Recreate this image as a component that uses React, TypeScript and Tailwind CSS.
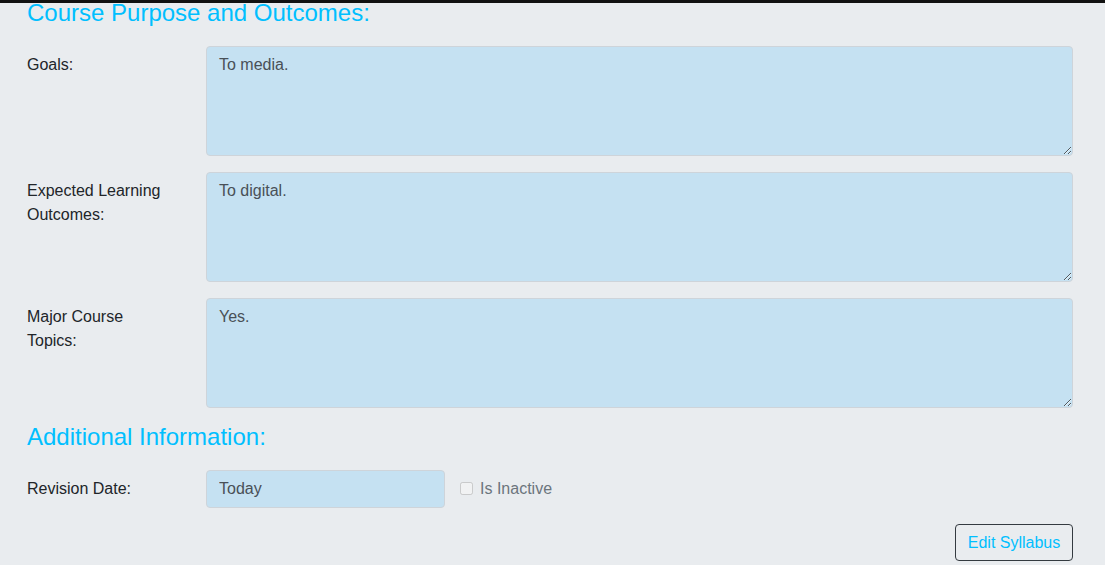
const font = "font-['Liberation_Sans',Arial,sans-serif]";

function TextRow({ label, value }: { label: string; value: string }) {
  return (
    <div className="flex">
      <label className="w-[179px] shrink-0 pr-[34px] pt-[7px] text-[16px] leading-[24px] text-[#212529]">
        {label}
      </label>
      <textarea
        readOnly
        defaultValue={value}
        className="h-[110px] flex-1 rounded-[4px] border border-[#ced4da] bg-[#c5e1f2] px-[12px] py-[6px] text-[16px] leading-[24px] text-[#495057] outline-none"
      />
    </div>
  );
}

export default function App() {
  return (
    <div className={`flex h-[565px] w-[1114px] overflow-hidden bg-white ${font}`}>
      <div className="w-[1105px] shrink-0 bg-[#e9ecef]">
        <div className="h-[3px] bg-[#111]" />
        <div className="pl-[27px] pr-[32px]">
          <h2 className="-mt-px text-[24px] leading-[22px] text-[#00bfff]">Course Purpose and Outcomes:</h2>

          <div className="mt-[22px] flex flex-col gap-[16px]">
            <TextRow label="Goals:" value="To media." />
            <TextRow label="Expected Learning Outcomes:" value="To digital." />
            <TextRow label="Major Course Topics:" value="Yes." />
          </div>

          <h2 className="mt-[18px] text-[24px] leading-[22px] text-[#00bfff]">Additional Information:</h2>

          <div className="mt-[22px] flex">
            <label className="w-[179px] shrink-0 pt-[7px] text-[16px] leading-[24px] text-[#212529]">
              Revision Date:
            </label>
            <input
              readOnly
              defaultValue="Today"
              className="h-[38px] w-[239px] rounded-[4px] border border-[#ced4da] bg-[#c5e1f2] px-[12px] text-[16px] text-[#495057] outline-none"
            />
            <label className="ml-[15px] flex items-center gap-[7px] pb-px text-[16px] leading-[24px] text-[#6c757d]">
              <input type="checkbox" disabled className="h-[13px] w-[13px]" />
              Is Inactive
            </label>
          </div>

          <div className="mt-[16px] flex justify-end">
            <button className="h-[37px] w-[118px] rounded-[4px] border border-[#343a40] text-[16px] text-[#00bfff]">
              Edit Syllabus
            </button>
          </div>
        </div>
      </div>
    </div>
  );
}
